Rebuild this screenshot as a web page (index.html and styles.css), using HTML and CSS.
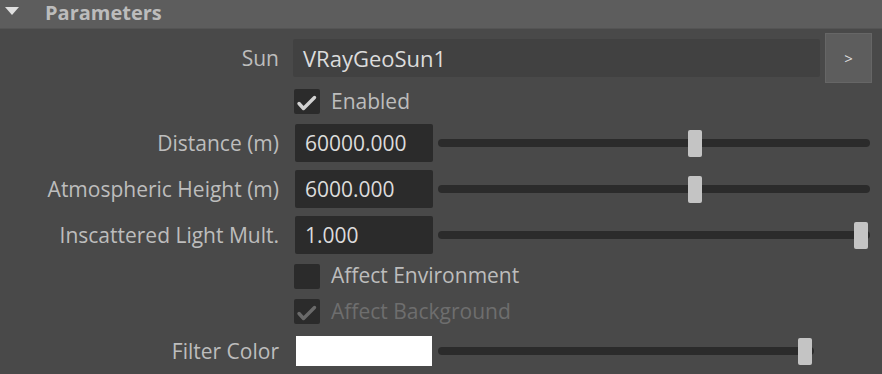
FILE: index.html
```html
<!DOCTYPE html>
<html lang="en">
<head>
    <meta charset="UTF-8">
    <title>Parameters</title>
    <link rel="stylesheet" href="styles.css">
</head>
<body>
    <div class="section-header">
        <span class="arrow"></span>
        <span class="section-title">Parameters</span>
    </div>
    <div class="panel">
        <div class="row row-sun">
            <label class="label">Sun</label>
            <div class="control">
                <div class="text-field wide">VRayGeoSun1</div>
                <button class="nav-btn">&gt;</button>
            </div>
        </div>
        <div class="row row-check">
            <span class="label"></span>
            <div class="control">
                <span class="checkbox checked">
                    <svg viewBox="0 0 26 25" width="26" height="25"><path d="M5 14.5 L9.5 19.5 L20.5 8.5" fill="none" stroke="currentColor" stroke-width="3.4" stroke-linecap="round" stroke-linejoin="round"/></svg>
                </span>
                <span class="check-label">Enabled</span>
            </div>
        </div>
        <div class="row row-slider">
            <label class="label">Distance (m)</label>
            <div class="control">
                <div class="num-field">60000.000</div>
                <div class="slider"><div class="track"></div><div class="handle" style="left: 250px"></div></div>
            </div>
        </div>
        <div class="row row-slider">
            <label class="label">Atmospheric Height (m)</label>
            <div class="control">
                <div class="num-field">6000.000</div>
                <div class="slider"><div class="track"></div><div class="handle" style="left: 250px"></div></div>
            </div>
        </div>
        <div class="row row-slider">
            <label class="label">Inscattered Light Mult.</label>
            <div class="control">
                <div class="num-field">1.000</div>
                <div class="slider"><div class="track"></div><div class="handle" style="left: 416px"></div></div>
            </div>
        </div>
        <div class="row row-env">
            <span class="label"></span>
            <div class="control">
                <span class="checkbox"></span>
                <span class="check-label">Affect Environment</span>
            </div>
        </div>
        <div class="row row-bg">
            <span class="label"></span>
            <div class="control">
                <span class="checkbox checked disabled">
                    <svg viewBox="0 0 26 25" width="26" height="25"><path d="M5 14.5 L9.5 19.5 L20.5 8.5" fill="none" stroke="currentColor" stroke-width="3.4" stroke-linecap="round" stroke-linejoin="round"/></svg>
                </span>
                <span class="check-label disabled">Affect Background</span>
            </div>
        </div>
        <div class="row row-color">
            <label class="label">Filter Color</label>
            <div class="control">
                <div class="swatch"></div>
                <div class="slider short"><div class="track"></div><div class="handle" style="left: 360px"></div></div>
            </div>
        </div>
    </div>
</body>
</html>
```

FILE: styles.css
```css
:root {
    --bg-color: #494949;
    --header-color: #5d5d5d;
    --field-dark: #2b2b2b;
    --field-mid: #414141;
    --label-color: #bdbdbd;
    --text-color: #dcdcdc;
    --disabled-color: #6e6e6e;
}
body {
    margin: 0;
    background-color: var(--bg-color);
    font-family: 'Open Sans', 'Noto Sans', sans-serif;
    font-size: 21px;
    color: var(--label-color);
    overflow: hidden;
}
.section-header {
    height: 28px;
    background-color: var(--header-color);
    display: flex;
    align-items: center;
    border-bottom: 1px solid #545454;
}
.arrow {
    width: 0;
    height: 0;
    margin-left: 5px;
    margin-top: -6px;
    border-left: 7.5px solid transparent;
    border-right: 7.5px solid transparent;
    border-top: 8px solid #e0e0e0;
}
.section-title {
    margin-left: 26px;
    font-weight: 700;
    font-size: 20px;
    color: #bcbcbc;
    margin-top: -4px;
}
.panel {
    padding-top: 4px;
}
.row {
    display: flex;
    align-items: center;
}
.row-sun { height: 50px; }
.row-check { height: 37px; }
.row-slider { height: 46px; }
.row-env { height: 36px; }
.row-bg { height: 35px; }
.row-color { height: 44px; }
.label {
    width: 279px;
    flex: none;
    text-align: right;
}
.control {
    margin-left: 14px;
    display: flex;
    align-items: center;
}
.text-field {
    box-sizing: border-box;
    height: 38px;
    padding-left: 10px;
    background-color: var(--field-mid);
    color: var(--text-color);
    display: flex;
    align-items: center;
    border-radius: 2px;
}
.text-field.wide {
    width: 527px;
    font-size: 22px;
}
.nav-btn {
    margin-left: 5px;
    width: 47px;
    height: 50px;
    background-color: var(--header-color);
    border: 1px solid #666666;
    color: var(--text-color);
    font-family: inherit;
    font-size: 15px;
    padding: 0;
}
.checkbox {
    width: 26px;
    height: 25px;
    margin-left: 1px;
    background-color: var(--field-dark);
    border-radius: 2px;
    color: #d2d2d2;
    display: block;
}
.checkbox svg {
    display: block;
}
.checkbox.disabled {
    color: #6a6a6a;
}
.check-label {
    margin-left: 11px;
    margin-top: -2px;
}
.check-label.disabled {
    color: var(--disabled-color);
}
.num-field {
    box-sizing: border-box;
    width: 138px;
    height: 38px;
    margin-left: 2px;
    padding-left: 10px;
    background-color: var(--field-dark);
    color: var(--text-color);
    display: flex;
    align-items: center;
    border-radius: 2px;
}
.slider {
    position: relative;
    width: 432px;
    height: 27px;
    margin-left: 5px;
    display: flex;
    align-items: center;
}
.slider.short {
    width: 376px;
}
.track {
    width: 100%;
    height: 8px;
    background-color: var(--field-dark);
    border-radius: 4px;
}
.handle {
    position: absolute;
    top: 0;
    width: 14px;
    height: 27px;
    background-color: #c4c4c4;
    border-radius: 2px;
}
.swatch {
    width: 136px;
    height: 30px;
    margin-left: 3px;
    margin-right: 1px;
    background-color: #ffffff;
}
```
